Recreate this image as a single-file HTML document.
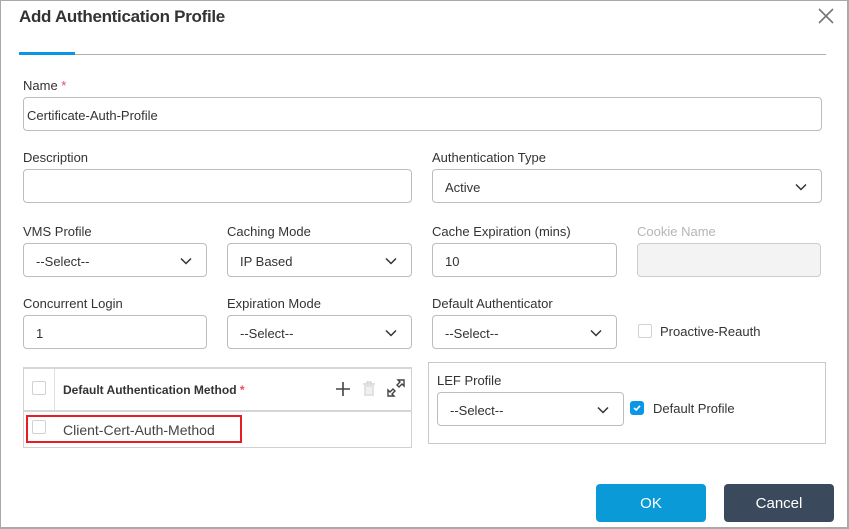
<!DOCTYPE html>
<html><head><meta charset="utf-8"><style>
*{box-sizing:border-box;margin:0;padding:0}
body{width:849px;height:529px;background:#fff;font-family:"Liberation Sans",sans-serif;color:#333;position:relative;overflow:hidden}
.frame{position:absolute;left:0;top:0;width:849px;height:529px;border:1px solid #a9a9a9;border-right:2px solid #a9a9a9;border-bottom:2px solid #a9a9a9}
.a{position:absolute}
.lbl{position:absolute;font-size:13px;color:#333;line-height:16px}
.inp{position:absolute;height:34px;border:1px solid #bdbdbd;border-radius:4px;background:#fff;font-size:13px;line-height:35px;padding-left:12px;color:#333}
.inp.dis{background:#f3f3f3;border-color:#ccc}
.chev{position:absolute;right:14px;top:13px;width:12px;height:8px}
.cb{position:absolute;width:14px;height:14px;border:1px solid #d2d2d2;border-radius:2px;background:#fff}
.btn{position:absolute;height:38px;border-radius:4px;color:#fff;font-size:15px;text-align:center;line-height:40px}
</style></head><body>
<div class="frame"></div>
<div class="a" style="left:19px;top:7px;font-size:17px;font-weight:bold;color:#333;letter-spacing:-0.3px">Add Authentication Profile</div>
<svg class="a" style="left:818px;top:8px" width="16" height="16" viewBox="0 0 16 16"><path d="M1 1L15 15M15 1L1 15" stroke="#777" stroke-width="1.6"/></svg>
<div class="a" style="left:19px;top:54px;width:807px;height:1px;background:#b0b0b0"></div>
<div class="a" style="left:19px;top:52px;width:56px;height:3px;background:#0a96e6"></div>

<div class="lbl" style="left:23px;top:78px">Name <span style="color:#e84a5f">*</span></div>
<div class="inp" style="left:23px;top:97px;width:799px;padding-left:3px">Certificate-Auth-Profile</div>

<div class="lbl" style="left:23px;top:150px">Description</div>
<div class="inp" style="left:23px;top:169px;width:389px"></div>
<div class="lbl" style="left:432px;top:150px">Authentication Type</div>
<div class="inp" style="left:432px;top:169px;width:390px">Active<svg class="chev" viewBox="0 0 12 8"><path d="M1 1.5L6 6.5L11 1.5" fill="none" stroke="#333" stroke-width="1.5"/></svg></div>

<div class="lbl" style="left:23px;top:224px">VMS Profile</div>
<div class="inp" style="left:23px;top:243px;width:184px">--Select--<svg class="chev" viewBox="0 0 12 8"><path d="M1 1.5L6 6.5L11 1.5" fill="none" stroke="#333" stroke-width="1.5"/></svg></div>
<div class="lbl" style="left:227px;top:224px">Caching Mode</div>
<div class="inp" style="left:227px;top:243px;width:185px">IP Based<svg class="chev" viewBox="0 0 12 8"><path d="M1 1.5L6 6.5L11 1.5" fill="none" stroke="#333" stroke-width="1.5"/></svg></div>
<div class="lbl" style="left:432px;top:224px">Cache Expiration (mins)</div>
<div class="inp" style="left:432px;top:243px;width:185px">10</div>
<div class="lbl" style="left:637px;top:224px;color:#b5b5b5">Cookie Name</div>
<div class="inp dis" style="left:637px;top:243px;width:184px"></div>

<div class="lbl" style="left:23px;top:296px">Concurrent Login</div>
<div class="inp" style="left:23px;top:315px;width:184px">1</div>
<div class="lbl" style="left:227px;top:296px">Expiration Mode</div>
<div class="inp" style="left:227px;top:315px;width:185px">--Select--<svg class="chev" viewBox="0 0 12 8"><path d="M1 1.5L6 6.5L11 1.5" fill="none" stroke="#333" stroke-width="1.5"/></svg></div>
<div class="lbl" style="left:432px;top:296px">Default Authenticator</div>
<div class="inp" style="left:432px;top:315px;width:185px">--Select--<svg class="chev" viewBox="0 0 12 8"><path d="M1 1.5L6 6.5L11 1.5" fill="none" stroke="#333" stroke-width="1.5"/></svg></div>
<div class="cb" style="left:638px;top:324px"></div>
<div class="lbl" style="left:660px;top:324px">Proactive-Reauth</div>

<!-- table -->
<div class="a" style="left:23px;top:367px;width:389px;height:81px;border:1px solid #d0d0d0;border-top:2px solid #d6d6d6"></div>
<div class="a" style="left:54px;top:369px;width:1px;height:42px;background:#e0e0e0"></div>
<div class="a" style="left:23px;top:410px;width:389px;height:2px;background:#d6d6d6"></div>
<div class="cb" style="left:32px;top:381px"></div>
<div class="lbl" style="left:63px;top:382px;font-size:12px;font-weight:bold;color:#333">Default Authentication Method <span style="color:#e84a5f">*</span></div>
<svg class="a" style="left:336px;top:382px" width="14" height="14" viewBox="0 0 14 14"><path d="M7 0V14M0 7H14" stroke="#444" stroke-width="1.6"/></svg>
<svg class="a" style="left:362px;top:381px" width="14" height="16" viewBox="0 0 14 16"><path d="M1 3H13M5 3V1H9V3" fill="none" stroke="#d5d5d5" stroke-width="1.4"/><rect x="2" y="4" width="10" height="11" fill="#e2e2e2"/><path d="M5 6V13M7 6V13M9 6V13" stroke="#fff" stroke-width="1"/></svg>
<svg class="a" style="left:387px;top:379px" width="18" height="18" viewBox="0 0 18 18" fill="none" stroke="#444" stroke-width="1.4"><path d="M11 1H17V7L15 5L12 8L10 6L13 3Z"/><path d="M7 17H1V11L3 13L6 10L8 12L5 15Z"/></svg>
<div class="cb" style="left:32px;top:420px"></div>
<div class="lbl" style="left:63px;top:422px;font-size:14px;color:#444">Client-Cert-Auth-Method</div>
<div class="a" style="left:26px;top:415px;width:216px;height:28px;border:2px solid #e81c24"></div>

<!-- LEF -->
<div class="a" style="left:428px;top:362px;width:398px;height:82px;border:1px solid #c9c9c9"></div>
<div class="lbl" style="left:437px;top:373px">LEF Profile</div>
<div class="inp" style="left:437px;top:392px;width:187px">--Select--<svg class="chev" viewBox="0 0 12 8"><path d="M1 1.5L6 6.5L11 1.5" fill="none" stroke="#333" stroke-width="1.5"/></svg></div>
<div class="cb" style="left:630px;top:401px;background:#0a96e6;border-color:#0a96e6;border-radius:3px"><svg width="12" height="12" viewBox="0 0 12 12" style="position:absolute;left:0;top:0"><path d="M3 6L5.2 8L9 3.8" fill="none" stroke="#fff" stroke-width="1.6"/></svg></div>
<div class="lbl" style="left:653px;top:401px">Default Profile</div>

<div class="btn" style="left:596px;top:484px;width:110px;background:#0a9ad8">OK</div>
<div class="btn" style="left:724px;top:484px;width:110px;background:#3a4a5c">Cancel</div>
</body></html>
